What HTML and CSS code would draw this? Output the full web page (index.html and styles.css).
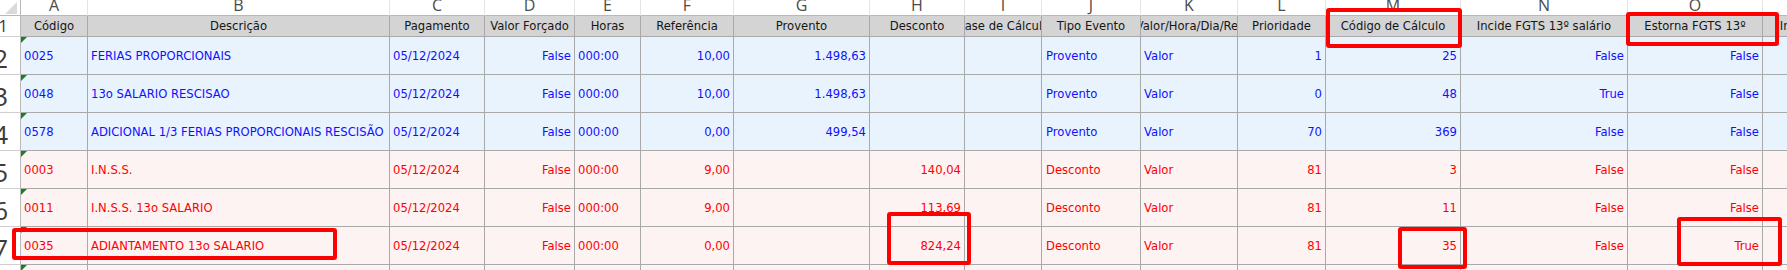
FILE: index.html
```html
<!DOCTYPE html>
<html lang="pt-BR">
<head>
<meta charset="utf-8">
<title>Planilha de eventos</title>
<link rel="stylesheet" href="styles.css">
</head>
<body>
<div class="sheet">
  <div class="corner"><svg class="corner-tri" width="12" height="12" viewBox="0 0 12 12"><path d="M12 0V12H0Z" fill="#dadada"/></svg></div>
  <div class="col">A</div><div class="col">B</div><div class="col">C</div><div class="col">D</div>
  <div class="col">E</div><div class="col">F</div><div class="col">G</div><div class="col">H</div>
  <div class="col">I</div><div class="col">J</div><div class="col">K</div><div class="col">L</div>
  <div class="col">M</div><div class="col">N</div><div class="col">O</div><div class="col">P</div>

  <div class="row head">
    <div class="rn rn-head">1</div>
    <div class="cell c"><span>Código</span></div>
    <div class="cell c"><span>Descrição</span></div>
    <div class="cell c"><span>Pagamento</span></div>
    <div class="cell c"><span>Valor Forçado</span></div>
    <div class="cell c"><span>Horas</span></div>
    <div class="cell c"><span>Referência</span></div>
    <div class="cell c"><span>Provento</span></div>
    <div class="cell c"><span>Desconto</span></div>
    <div class="cell c"><span>Base de Cálculo</span></div>
    <div class="cell c"><span>Tipo Evento</span></div>
    <div class="cell c"><span>Valor/Hora/Dia/Ref</span></div>
    <div class="cell c"><span>Prioridade</span></div>
    <div class="cell c"><span>Código de Cálculo</span></div>
    <div class="cell c"><span>Incide FGTS 13º salário</span></div>
    <div class="cell c"><span>Estorna FGTS 13º</span></div>
    <div class="cell c"><span>Incide INSS 13º salário</span></div>
  </div>

  <div class="row blue">
    <div class="rn">2</div>
    <div class="cell code">0025</div>
    <div class="cell">FERIAS PROPORCIONAIS</div>
    <div class="cell">05/12/2024</div>
    <div class="cell r">False</div>
    <div class="cell">000:00</div>
    <div class="cell r">10,00</div>
    <div class="cell r">1.498,63</div>
    <div class="cell"></div>
    <div class="cell"></div>
    <div class="cell pl">Provento</div>
    <div class="cell">Valor</div>
    <div class="cell r">1</div>
    <div class="cell r">25</div>
    <div class="cell r">False</div>
    <div class="cell r">False</div>
    <div class="cell"></div>
  </div>

  <div class="row blue">
    <div class="rn">3</div>
    <div class="cell code">0048</div>
    <div class="cell">13o SALARIO RESCISAO</div>
    <div class="cell">05/12/2024</div>
    <div class="cell r">False</div>
    <div class="cell">000:00</div>
    <div class="cell r">10,00</div>
    <div class="cell r">1.498,63</div>
    <div class="cell"></div>
    <div class="cell"></div>
    <div class="cell pl">Provento</div>
    <div class="cell">Valor</div>
    <div class="cell r">0</div>
    <div class="cell r">48</div>
    <div class="cell r">True</div>
    <div class="cell r">False</div>
    <div class="cell"></div>
  </div>

  <div class="row blue">
    <div class="rn">4</div>
    <div class="cell code">0578</div>
    <div class="cell">ADICIONAL 1/3 FERIAS PROPORCIONAIS RESCISÃO</div>
    <div class="cell">05/12/2024</div>
    <div class="cell r">False</div>
    <div class="cell">000:00</div>
    <div class="cell r">0,00</div>
    <div class="cell r">499,54</div>
    <div class="cell"></div>
    <div class="cell"></div>
    <div class="cell pl">Provento</div>
    <div class="cell">Valor</div>
    <div class="cell r">70</div>
    <div class="cell r">369</div>
    <div class="cell r">False</div>
    <div class="cell r">False</div>
    <div class="cell"></div>
  </div>

  <div class="row pink">
    <div class="rn">5</div>
    <div class="cell code">0003</div>
    <div class="cell">I.N.S.S.</div>
    <div class="cell">05/12/2024</div>
    <div class="cell r">False</div>
    <div class="cell">000:00</div>
    <div class="cell r">9,00</div>
    <div class="cell"></div>
    <div class="cell r">140,04</div>
    <div class="cell"></div>
    <div class="cell pl">Desconto</div>
    <div class="cell">Valor</div>
    <div class="cell r">81</div>
    <div class="cell r">3</div>
    <div class="cell r">False</div>
    <div class="cell r">False</div>
    <div class="cell"></div>
  </div>

  <div class="row pink">
    <div class="rn">6</div>
    <div class="cell code">0011</div>
    <div class="cell">I.N.S.S. 13o SALARIO</div>
    <div class="cell">05/12/2024</div>
    <div class="cell r">False</div>
    <div class="cell">000:00</div>
    <div class="cell r">9,00</div>
    <div class="cell"></div>
    <div class="cell r">113,69</div>
    <div class="cell"></div>
    <div class="cell pl">Desconto</div>
    <div class="cell">Valor</div>
    <div class="cell r">81</div>
    <div class="cell r">11</div>
    <div class="cell r">False</div>
    <div class="cell r">False</div>
    <div class="cell"></div>
  </div>

  <div class="row pink">
    <div class="rn">7</div>
    <div class="cell code">0035</div>
    <div class="cell">ADIANTAMENTO 13o SALARIO</div>
    <div class="cell">05/12/2024</div>
    <div class="cell r">False</div>
    <div class="cell">000:00</div>
    <div class="cell r">0,00</div>
    <div class="cell"></div>
    <div class="cell r">824,24</div>
    <div class="cell"></div>
    <div class="cell pl">Desconto</div>
    <div class="cell">Valor</div>
    <div class="cell r">81</div>
    <div class="cell r">35</div>
    <div class="cell r">False</div>
    <div class="cell r">True</div>
    <div class="cell"></div>
  </div>

  <div class="row pink">
    <div class="rn"></div>
    <div class="cell code"></div>
    <div class="cell"></div>
    <div class="cell"></div>
    <div class="cell"></div>
    <div class="cell"></div>
    <div class="cell"></div>
    <div class="cell"></div>
    <div class="cell"></div>
    <div class="cell"></div>
    <div class="cell"></div>
    <div class="cell"></div>
    <div class="cell"></div>
    <div class="cell"></div>
    <div class="cell"></div>
    <div class="cell"></div>
    <div class="cell"></div>
  </div>

  <div class="mark m1"></div>
  <div class="mark m2"></div>
  <div class="mark m3"></div>
  <div class="mark m4"></div>
  <div class="mark m5"></div>
  <div class="mark m6"></div>
</div>
</body>
</html>
```

FILE: styles.css
```css
html, body {
  margin: 0;
  padding: 0;
  background: #ffffff;
  overflow: hidden;
}

.sheet {
  position: relative;
  display: grid;
  grid-template-columns: 21px 67px 302px 95px 90px 66px 93px 136px 95px 77px 99px 97px 88px 135px 167px 135px 166px;
  grid-template-rows: 16px 21px repeat(7, 38px);
  width: max-content;
  font-family: "DejaVu Sans", Verdana, sans-serif;
  font-size: 11.6px;
}

.sheet > div,
.row > div {
  box-sizing: border-box;
  min-width: 0;
}

/* top-left select-all corner */
.corner {
  display: flex;
  align-items: flex-end;
  justify-content: flex-end;
  padding: 0 3px 1px 0;
  border-right: 1px solid #b8b8b8;
  border-bottom: 1px solid #b8b8b8;
  background: #ffffff;
}

.corner-tri {
  display: block;
}

/* column letters */
.col {
  display: flex;
  justify-content: center;
  align-items: flex-start;
  overflow: hidden;
  background: #ffffff;
  border-right: 1px solid #e4e4e4;
  border-bottom: 1px solid #b8b8b8;
  font-family: "Open Sans", "DejaVu Sans", sans-serif;
  font-size: 16px;
  line-height: 10px;
  color: #4a4a4a;
}

.row {
  display: contents;
}

/* row numbers */
.rn {
  display: flex;
  justify-content: flex-end;
  align-items: flex-start;
  padding: 3px 12px 0 0;
  background: #ffffff;
  border-right: 1px solid #b8b8b8;
  border-bottom: 1px solid #cfcfcf;
  font-family: "Open Sans", "DejaVu Sans", sans-serif;
  font-size: 26px;
  line-height: normal;
  color: #3c3c3c;
  overflow: hidden;
}

.rn-head {
  font-size: 17px;
  line-height: 17px;
  padding-top: 1px;
}

/* data cells */
.cell {
  position: relative;
  display: flex;
  align-items: center;
  justify-content: flex-start;
  padding: 0 3px;
  border-right: 1px solid #a9a9a9;
  border-bottom: 1px solid #a9a9a9;
  white-space: nowrap;
  overflow: hidden;
}

.cell.r {
  justify-content: flex-end;
}

.cell.c {
  justify-content: center;
}

.cell.c > span {
  flex-shrink: 0;
}

.cell.pl {
  padding-left: 4px;
}

.head .cell {
  background: #d4d4d4;
  color: #161616;
}

.blue .cell {
  background: #e9f3fd;
  color: #1010ff;
}

.pink .cell {
  background: #fdf3f3;
  color: #ff0000;
}

/* green error indicator in column A */
.cell.code::before {
  content: "";
  position: absolute;
  top: 0;
  left: 0;
  width: 0;
  height: 0;
  border-top: 6px solid #17802a;
  border-right: 6px solid transparent;
}

/* red annotation boxes drawn over the sheet */
.mark {
  position: absolute;
  box-sizing: border-box;
  border: 4px solid #ff0000;
  border-radius: 3px;
  pointer-events: none;
}

.m1 { left: 12px;   top: 228px; width: 325px; height: 32px; }
.m2 { left: 1326px; top: 8px;   width: 136px; height: 40px; }
.m3 { left: 1626px; top: 12px;  width: 153px; height: 34px; }
.m4 { left: 887px;  top: 212px; width: 84px;  height: 53px; }
.m5 { left: 1398px; top: 227px; width: 69px;  height: 42px; }
.m6 { left: 1677px; top: 217px; width: 105px; height: 49px; }
```
